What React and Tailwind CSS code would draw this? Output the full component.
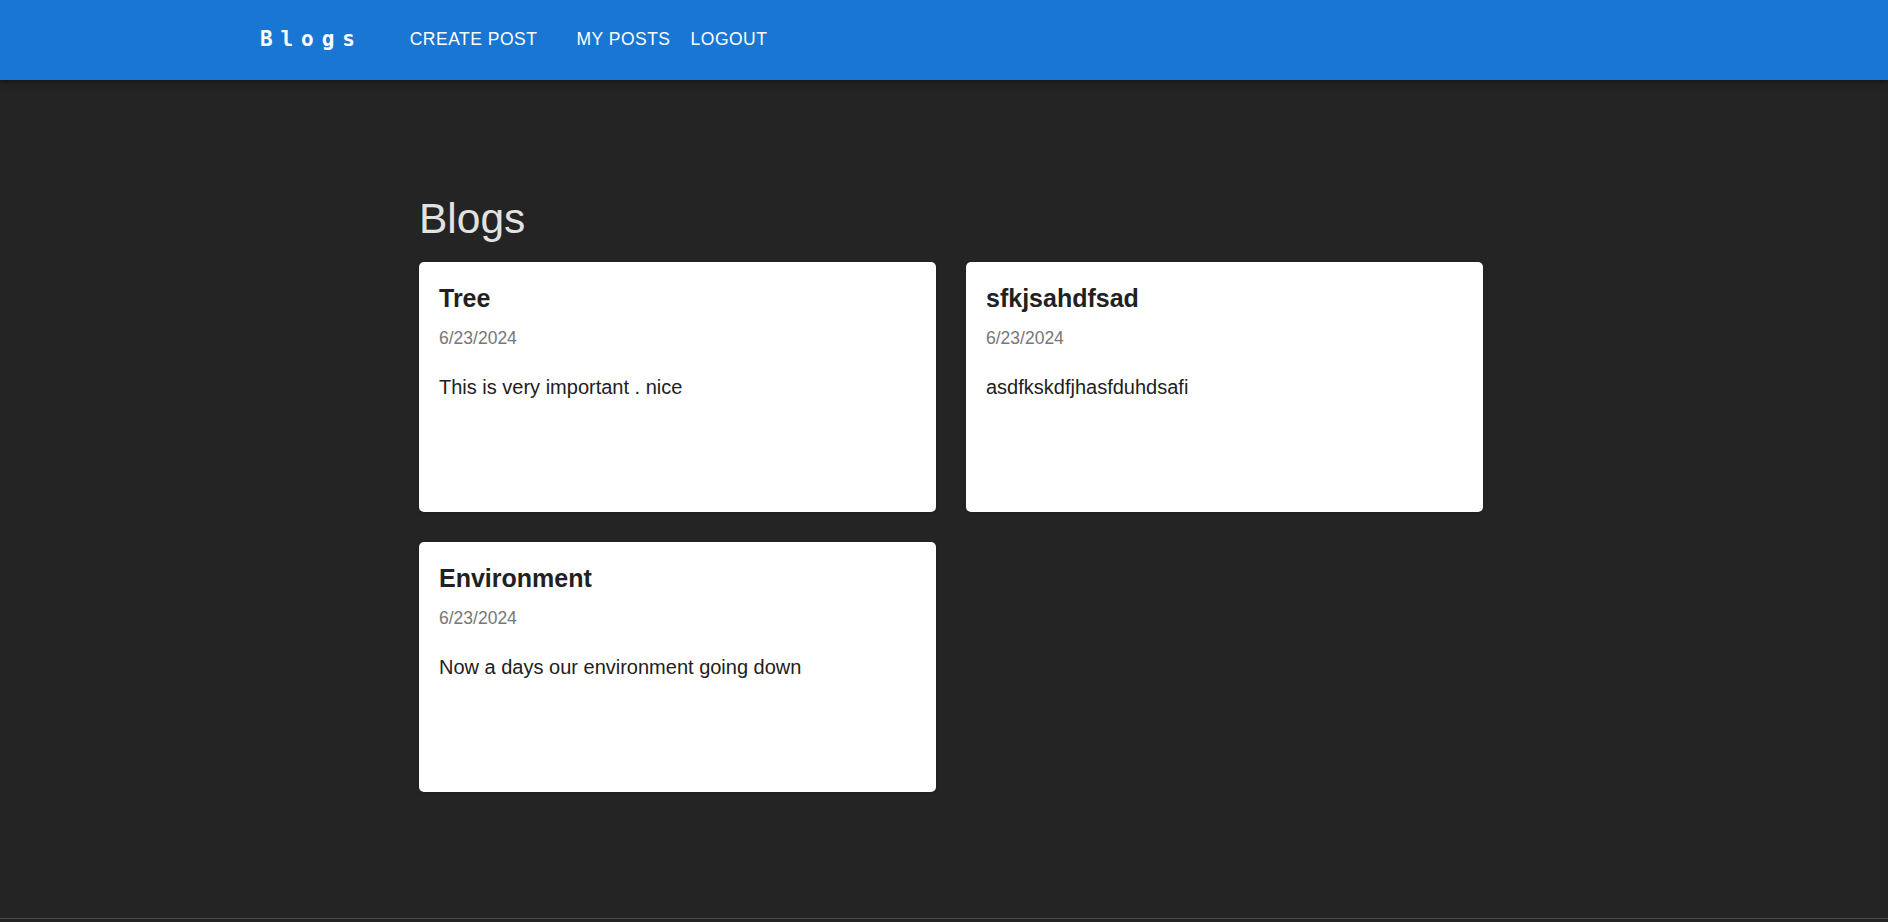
import React from 'react';

const posts = [
  { title: 'Tree', date: '6/23/2024', body: 'This is very important . nice' },
  { title: 'sfkjsahdfsad', date: '6/23/2024', body: 'asdfkskdfjhasfduhdsafi' },
  { title: 'Environment', date: '6/23/2024', body: 'Now a days our environment going down' },
];

const PostCard = ({ post }) => (
  <div className="h-[250px] rounded-[5px] bg-white px-5 pt-5 shadow-sm">
    <h3 className="text-[25px] font-bold leading-[32px] text-[#212121]">{post.title}</h3>
    <p className="mt-[12px] text-[17.5px] leading-[24px] text-[#777777]">{post.date}</p>
    <p className="mt-[23px] text-[20px] leading-[28px] text-[#212121]">{post.body}</p>
  </div>
);

const App = () => {
  return (
    <div
      className="flex h-[922px] flex-col bg-[#242424]"
      style={{ fontFamily: '"Liberation Sans", Arial, sans-serif' }}
    >
      {/* Top app bar */}
      <header className="flex h-[80px] shrink-0 items-center bg-[#1976d2] pl-[260px] shadow-[0_2px_4px_-1px_rgba(0,0,0,0.2),0_4px_5px_0_rgba(0,0,0,0.14),0_1px_10px_0_rgba(0,0,0,0.12)]">
        <span
          className="text-[21px] font-bold tracking-[7.9px] text-white"
          style={{ fontFamily: '"DejaVu Sans Mono", monospace' }}
        >
          Blogs
        </span>
        <nav className="ml-[47px] flex items-center pb-[3px] text-[17.5px] text-white">
          <button className="uppercase tracking-[0.5px] leading-[24px]">Create Post</button>
          <button className="ml-[39px] uppercase tracking-[0.5px] leading-[24px]">My Posts</button>
          <button className="ml-[20px] uppercase tracking-[0.5px] leading-[24px]">Logout</button>
        </nav>
      </header>

      {/* Blog list */}
      <main className="flex-1 pt-[113px]">
        <div className="ml-[419px] w-[1064px]">
          <h1 className="mb-[17px] text-[42.5px] leading-[52px] text-[#e2e2e2]">Blogs</h1>
          <div className="grid grid-cols-2 gap-[30px]">
            {posts.map((post, i) => (
              <PostCard key={i} post={post} />
            ))}
          </div>
        </div>
      </main>

      <div className="h-px shrink-0 bg-[#4a4a4a]" />
      <div className="h-[3px] shrink-0" />
    </div>
  );
};

export default App;
